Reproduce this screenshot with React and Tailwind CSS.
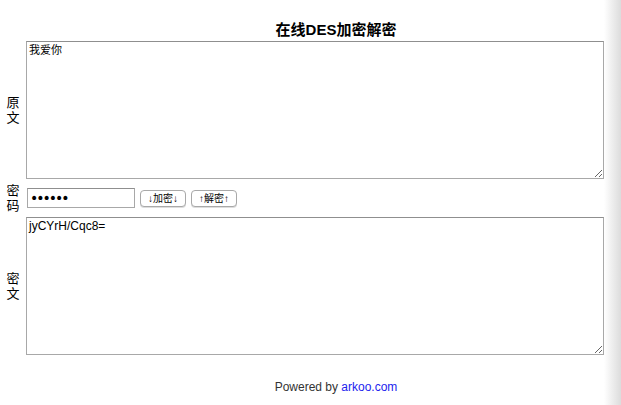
export default function App() {
  const cjk = { fontFamily: '"Liberation Sans", "Noto Sans CJK SC", sans-serif' };
  return (
    <div className="flex w-[621px] h-[405px] bg-white text-black" style={cjk}>
      <div className="flex-1 flex flex-col">
        <div className="pl-[68px] pt-[20px] h-[41px] text-center text-[15px] font-bold leading-[20px]">
          在线DES加密解密
        </div>
        <div className="grid grid-cols-[26px_578px] gap-y-0">
          <div className="flex items-center justify-center">
            <div className="text-[13px] leading-[15px] w-[13px] text-center">原文</div>
          </div>
          <textarea
            defaultValue="我爱你"
            className="h-[138px] w-[578px] border border-[#a8a8a8] border-t-[#8f8f8f] px-[2px] py-[1px] text-[11px] leading-[14px] outline-none"
          />
          <div className="flex items-center justify-center h-[38px]">
            <div className="text-[13px] leading-[15px] w-[13px] text-center">密码</div>
          </div>
          <div className="flex items-center gap-[5px] h-[38px]">
            <input
              type="password"
              defaultValue="123456"
              className="ml-[1px] w-[108px] h-[20px] border border-[#a8a8a8] border-t-[#8f8f8f] px-[2px] font-['DejaVu_Sans'] text-[14px] tracking-[-2px] outline-none"
            />
            <button className="h-[17px] w-[46px] rounded-[4px] border border-[#a9a9a9] bg-white text-[10px] leading-[15px] shadow-[0_1px_0_#ddd]">
              ↓加密↓
            </button>
            <button className="h-[17px] w-[46px] rounded-[4px] border border-[#a9a9a9] bg-white text-[10px] leading-[15px] shadow-[0_1px_0_#ddd]">
              ↑解密↑
            </button>
          </div>
          <div className="flex items-center justify-center">
            <div className="text-[13px] leading-[15px] w-[13px] text-center">密文</div>
          </div>
          <textarea
            defaultValue="jyCYrH/Cqc8="
            className="h-[138px] w-[578px] border border-[#a8a8a8] border-t-[#8f8f8f] px-[2px] py-[1px] text-[12px] leading-[15px] outline-none"
          />
        </div>
        <div className="pl-[68px] pt-[23px] text-center text-[12px] text-[#333]">
          Powered by <a className="text-[#2222ee]">arkoo.com</a>
        </div>
      </div>
      <div className="w-[18px] bg-gradient-to-r from-white to-[#dcdcdc]" />
    </div>
  );
}
